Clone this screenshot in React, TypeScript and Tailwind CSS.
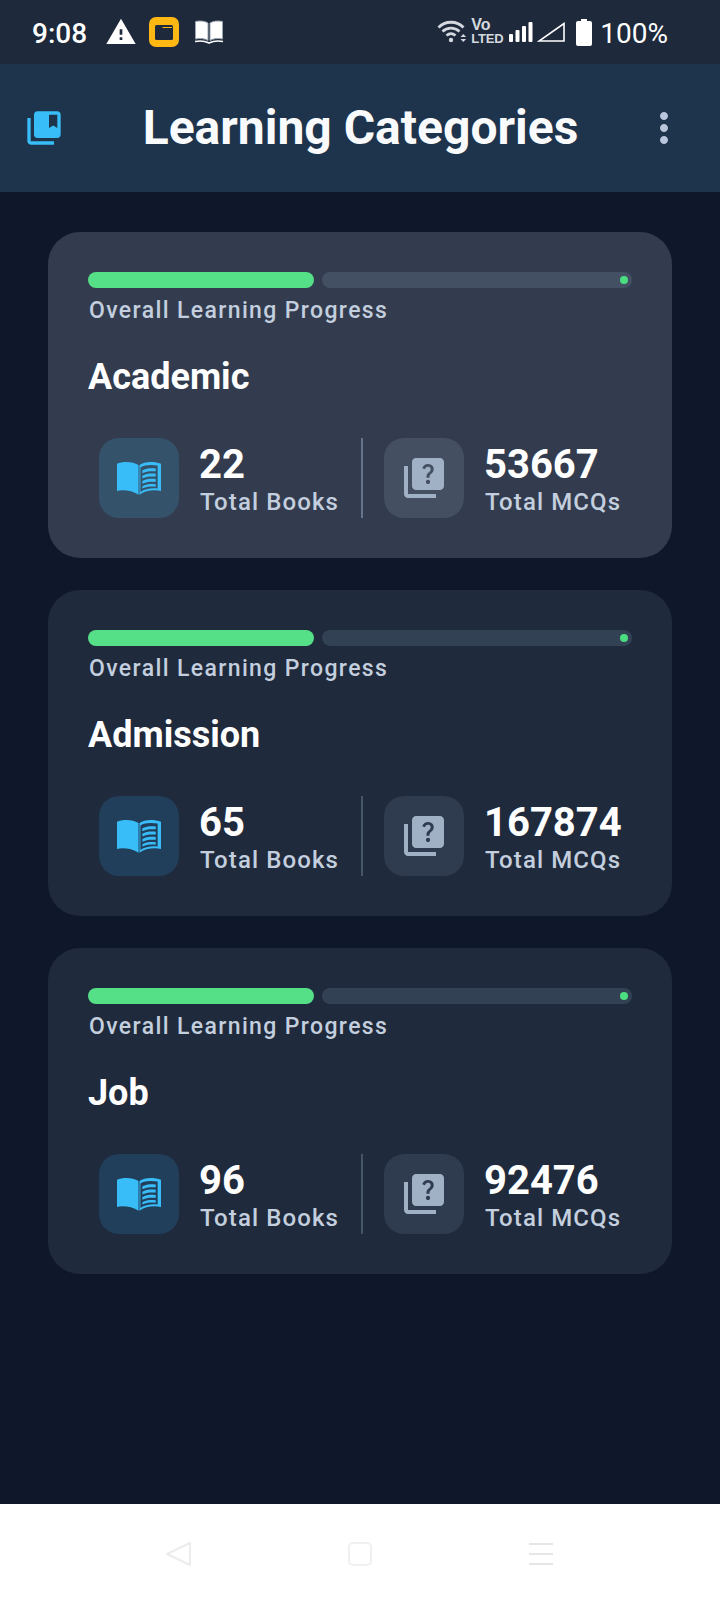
import React from 'react';
import { MdCollectionsBookmark, MdMoreVert, MdQuiz, MdWarning } from 'react-icons/md';

interface CategoryCardProps {
  title: string;
  books: number;
  mcqs: number;
  pressed?: boolean;
}

// open book with a ruled right page, the dark part is cut out of the page
const BookIcon: React.FC = () => (
  <svg width="44" height="35" viewBox="0 0 46 36" className="text-[#38bdf8]" fill="currentColor">
    <path d="M0 2.500C5 .5 16 -.5 22.500 4V35C16 30.500 6 29.500 0 31z" />
    <path
      fillRule="evenodd"
      d="M23.500 4C29 -.5 40 .5 46 2.500V31C39 29.500 29 30.500 23.500 35zM24.500 6.500V32C29 29 36 27.500 42.500 28.500V4.500C36 3.500 29 3.500 24.500 6.500zM26.500 9.500C30 7.500 35 7 40.500 7.500V10.500C35 10 30 10.500 26.500 12.500zM26.500 15C30 13 35 12.500 40.500 13V16C35 15.500 30 16 26.500 18zM26.500 20.500C30 18.500 35 18 40.500 18.500V21.500C35 21 30 21.500 26.500 23.500zM26.500 26C30 24 35 23.500 40.500 24V26.500C35 26 30 26.500 26.500 28.500z"
    />
  </svg>
);

const CategoryCard: React.FC<CategoryCardProps> = ({ title, books, mcqs, pressed }) => {
  return (
    <div className={`h-[326px] rounded-[32px] px-10 pt-10 ${pressed ? 'bg-[#323c4e]' : 'bg-[#1f2a3c]'}`}>
      <div className="flex h-4 gap-2">
        <div className="w-[226px] rounded-full bg-[#55df87]" />
        <div className={`relative flex-1 rounded-full ${pressed ? 'bg-[#435063]' : 'bg-[#334155]'}`}>
          <div className="absolute right-1 top-1 h-2 w-2 rounded-full bg-[#4ade80]" />
        </div>
      </div>
      <div className="mt-[9px] pl-px text-[23px] font-medium leading-[28px] tracking-[1.37px] text-[#c3cede]">Overall Learning Progress</div>
      <div className="mt-7 text-[36px] font-bold leading-[48px] text-white">{title}</div>
      <div className="mt-[37px] flex h-20 items-center pl-[11px]">
        <div className={`flex h-20 w-20 items-center justify-center rounded-[20px] ${pressed ? 'bg-[#35526b]' : 'bg-[#213e5a]'}`}>
          <BookIcon />
        </div>
        <div className="ml-[21px] w-[161px] pt-1">
          <div className="-ml-px text-[40px] font-bold leading-[44px] text-white">{books}</div>
          <div className="text-[24px] font-medium leading-[30px] tracking-[1.1px] text-[#c3cede]">Total Books</div>
        </div>
        <div className={`h-20 w-0.5 ${pressed ? 'bg-[#64748b]' : 'bg-[#475569]'}`} />
        <div className={`ml-[21px] flex h-20 w-20 items-center justify-center rounded-[20px] ${pressed ? 'bg-[#444f62]' : 'bg-[#2f3b4e]'}`}>
          <MdQuiz size={48} className="text-[#a0b0c5]" />
        </div>
        <div className="ml-5 pt-1">
          <div className="text-[40px] font-bold leading-[44px] text-white">{mcqs}</div>
          <div className="ml-px text-[24px] font-medium leading-[30px] tracking-[1.1px] text-[#c3cede]">Total MCQs</div>
        </div>
      </div>
    </div>
  );
};

const StatusBar: React.FC = () => (
  <div className="flex h-16 items-center justify-between bg-[#1e293b] pl-8 pr-[52px] text-white">
    <div className="flex items-center">
      <span className="mt-[3px] text-[28px] font-medium leading-none">9:08</span>
      <MdWarning size={32} className="ml-[18px]" />
      <div className="ml-3 flex h-[30px] w-[30px] items-center justify-center rounded-[7px] bg-[#fdb813]">
        <svg width="18" height="15" viewBox="0 0 18 15">
          <rect width="18" height="15" rx="1.500" fill="#1e293b" />
          <path d="M7.500 2.500H17" stroke="#fdb813" strokeWidth="1" />
        </svg>
      </div>
      <svg className="ml-[15px]" width="30" height="26" viewBox="0 0 30 26" fill="none">
        <path d="M14 4C11 2 6 1.500 1.500 2.500V20c4.500-1 9.500-.5 12.500 1.500V4z" fill="#fff" stroke="#9aa3b0" strokeWidth="1" />
        <path d="M16 4c3-2 8-2.500 12.500-1.500V20c-4.500-1-9.500-.5-12.500 1.500V4z" fill="#fff" stroke="#9aa3b0" strokeWidth="1" />
        <path d="M1 22.500c5-1 10-.5 14 1.500 4-2 9-2.500 14-1.500" stroke="#fff" strokeWidth="1.500" />
      </svg>
    </div>
    <div className="flex items-center">
      <svg width="30" height="24" viewBox="0 0 30 24" fill="none" stroke="#d5d9df" strokeWidth="2.800">
        <path d="M1.500 7.500C8 .5 20 .5 26.500 7.500" />
        <path d="M5.500 11.500c5-4.500 12-4.500 17 0" />
        <path d="M9.500 15.500c3-2.500 6-2.500 9 0" />
        <circle cx="14" cy="20" r="2.200" fill="#d5d9df" stroke="none" />
        <path d="M23.500 17l2.800-3 2.800 3zM23.500 19l2.800 3 2.800-3z" fill="#d5d9df" stroke="none" />
      </svg>
      <div className="ml-1 flex w-[30px] flex-col font-['Liberation_Sans',sans-serif] font-bold text-[#d5d9df]">
        <span className="text-[16px] leading-[14px]">Vo</span>
        <span className="text-[13px] leading-[14px] tracking-[-0.2px]">LTED</span>
      </div>
      <svg className="ml-2" width="24" height="20" viewBox="0 0 24 20" fill="#fff">
        <rect x="0" y="12" width="4" height="8" rx="1" />
        <rect x="6.500" y="8" width="4" height="12" rx="1" />
        <rect x="13" y="4" width="4" height="16" rx="1" />
        <rect x="19.500" y="0" width="4" height="20" rx="1" />
      </svg>
      <svg className="ml-1" width="28" height="20" viewBox="0 0 28 20" fill="none" stroke="#fff" strokeWidth="1.600">
        <path d="M27 1.500V19H2L27 1.500z" />
      </svg>
      <svg className="ml-[11px]" width="16" height="27" viewBox="0 0 16 27" fill="#fff">
        <path d="M5 0h6v2h3a2 2 0 0 1 2 2v21a2 2 0 0 1-2 2H2a2 2 0 0 1-2-2V4a2 2 0 0 1 2-2h3V0z" />
      </svg>
      <span className="ml-2 mt-[3px] text-[28px] leading-none">100%</span>
    </div>
  </div>
);

export default function App() {
  return (
    <div className="flex h-[1600px] w-[720px] flex-col overflow-hidden bg-[#0f172a] font-['Roboto',sans-serif]">
      <StatusBar />
      <div className="flex h-32 items-center justify-between bg-[#1e334c] pl-6 pr-8">
        <MdCollectionsBookmark size={40} className="text-[#38bdf8]" />
        <div className="ml-[17px] text-[48px] font-bold text-[#f8fafc]">Learning Categories</div>
        <MdMoreVert size={48} className="text-[#b7c6da]" />
      </div>
      <div className="flex flex-1 flex-col gap-8 px-12 pt-10">
        <CategoryCard title="Academic" books={22} mcqs={53667} pressed />
        <CategoryCard title="Admission" books={65} mcqs={167874} />
        <CategoryCard title="Job" books={96} mcqs={92476} />
      </div>
      <div className="flex h-24 items-center justify-between bg-white px-[166px] pt-1">
        <svg width="26" height="26" viewBox="0 0 26 26" fill="none" stroke="#ececec" strokeWidth="2" strokeLinejoin="round">
          <path d="M24 2v22L1 13z" />
        </svg>
        <svg width="26" height="26" viewBox="0 0 26 26" fill="none" stroke="#f0f0f0" strokeWidth="2">
          <rect x="2" y="2" width="22" height="22" rx="4" />
        </svg>
        <svg width="26" height="26" viewBox="0 0 26 26" fill="none" stroke="#e6e6e6" strokeWidth="2">
          <path d="M1 3h24M1 13h24M1 23h24" />
        </svg>
      </div>
    </div>
  );
}
